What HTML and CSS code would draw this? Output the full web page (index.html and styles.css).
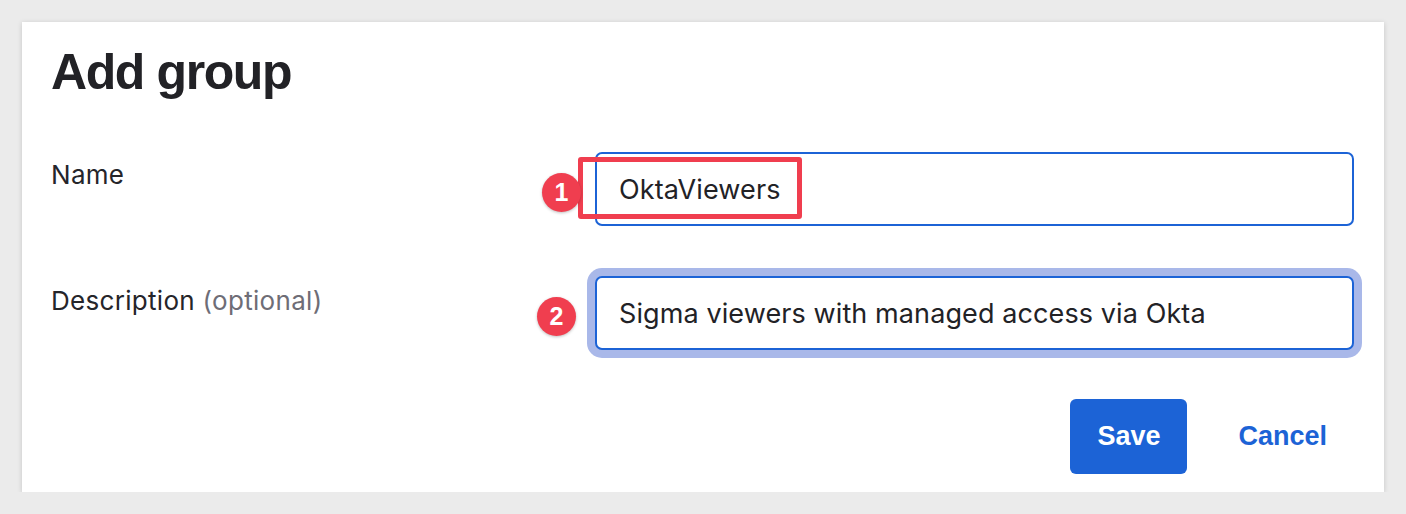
FILE: index.html
```html
<!DOCTYPE html>
<html lang="en">
<head>
<meta charset="utf-8">
<title>Add group</title>
<link rel="stylesheet" href="styles.css">
</head>
<body>
<div class="card">
  <h1 class="title">Add group</h1>
  <div class="form">
    <label class="label" for="name">Name</label>
    <div class="field">
      <input id="name" class="input" type="text" value="OktaViewers">
      <span class="highlight"></span>
      <span class="badge badge-one">1</span>
    </div>
    <label class="label label-desc" for="desc">Description <span class="optional">(optional)</span></label>
    <div class="field">
      <input id="desc" class="input input-focus" type="text" value="Sigma viewers with managed access via Okta">
      <span class="badge badge-two">2</span>
    </div>
  </div>
  <div class="actions">
    <button class="btn btn-primary" type="button">Save</button>
    <button class="btn btn-link" type="button">Cancel</button>
  </div>
</div>
</body>
</html>
```

FILE: styles.css
```css
* { box-sizing: border-box; }

body {
  margin: 0;
  background: #ebebeb;
  font-family: Inter, "Liberation Sans", Arial, sans-serif;
  color: #222226;
}

.card {
  margin: 22px 0 0 22px;
  width: 1362px;
  height: 470px;
  background: #ffffff;
  box-shadow: 0 1px 5px rgba(0, 0, 0, 0.16);
  padding: 20px 30px 18px 29px;
  display: flex;
  flex-direction: column;
}

.title {
  margin: 0;
  font-family: "Liberation Sans", Arial, sans-serif;
  font-size: 50px;
  line-height: 60px;
  font-weight: 700;
  letter-spacing: -1.4px;
  color: #222226;
}

.form {
  margin-top: 50px;
  display: grid;
  grid-template-columns: 544px 759px;
  row-gap: 50px;
}

.label {
  padding-top: 8px;
  font-family: Inter, "Liberation Sans", Arial, sans-serif;
  font-size: 26px;
  line-height: 30px;
  letter-spacing: 0.3px;
  color: #25252a;
}

.label-desc {
  padding-top: 10px;
}

.optional {
  color: #6e6d76;
}

.field {
  position: relative;
  height: 74px;
}

.input {
  display: block;
  width: 100%;
  height: 74px;
  margin: 0;
  padding: 0 22px;
  border: 2px solid #1c63d6;
  border-radius: 7px;
  background: #fff;
  font-family: Inter, "Liberation Sans", Arial, sans-serif;
  font-size: 27px;
  letter-spacing: 0.1px;
  color: #222226;
  outline: none;
}

.input-focus {
  box-shadow: 0 0 0 8px #a9b8e9;
}

.highlight {
  position: absolute;
  left: -17px;
  top: 5px;
  width: 224px;
  height: 62px;
  border: 5px solid #f03e4f;
  border-radius: 3px;
  pointer-events: none;
}

.badge {
  position: absolute;
  width: 39px;
  height: 39px;
  border-radius: 50%;
  background: #f03e4f;
  color: #fff;
  font-family: "Liberation Sans", Arial, sans-serif;
  font-weight: 700;
  font-size: 25px;
  line-height: 39px;
  text-align: center;
  box-shadow: 0 1px 3px rgba(0, 0, 0, 0.25);
}

.badge-one {
  left: -53px;
  top: 21px;
}

.badge-two {
  left: -58px;
  top: 21px;
}

.actions {
  margin-top: auto;
  display: flex;
  justify-content: flex-end;
  gap: 24px;
}

.btn {
  height: 75px;
  padding: 0 27px;
  border: none;
  border-radius: 6px;
  font-family: "Liberation Sans", Arial, sans-serif;
  font-size: 27px;
  font-weight: 700;
  cursor: pointer;
}

.btn-primary {
  background: #1c63d6;
  color: #fff;
}

.btn-link {
  background: transparent;
  color: #1c63d6;
}
```
